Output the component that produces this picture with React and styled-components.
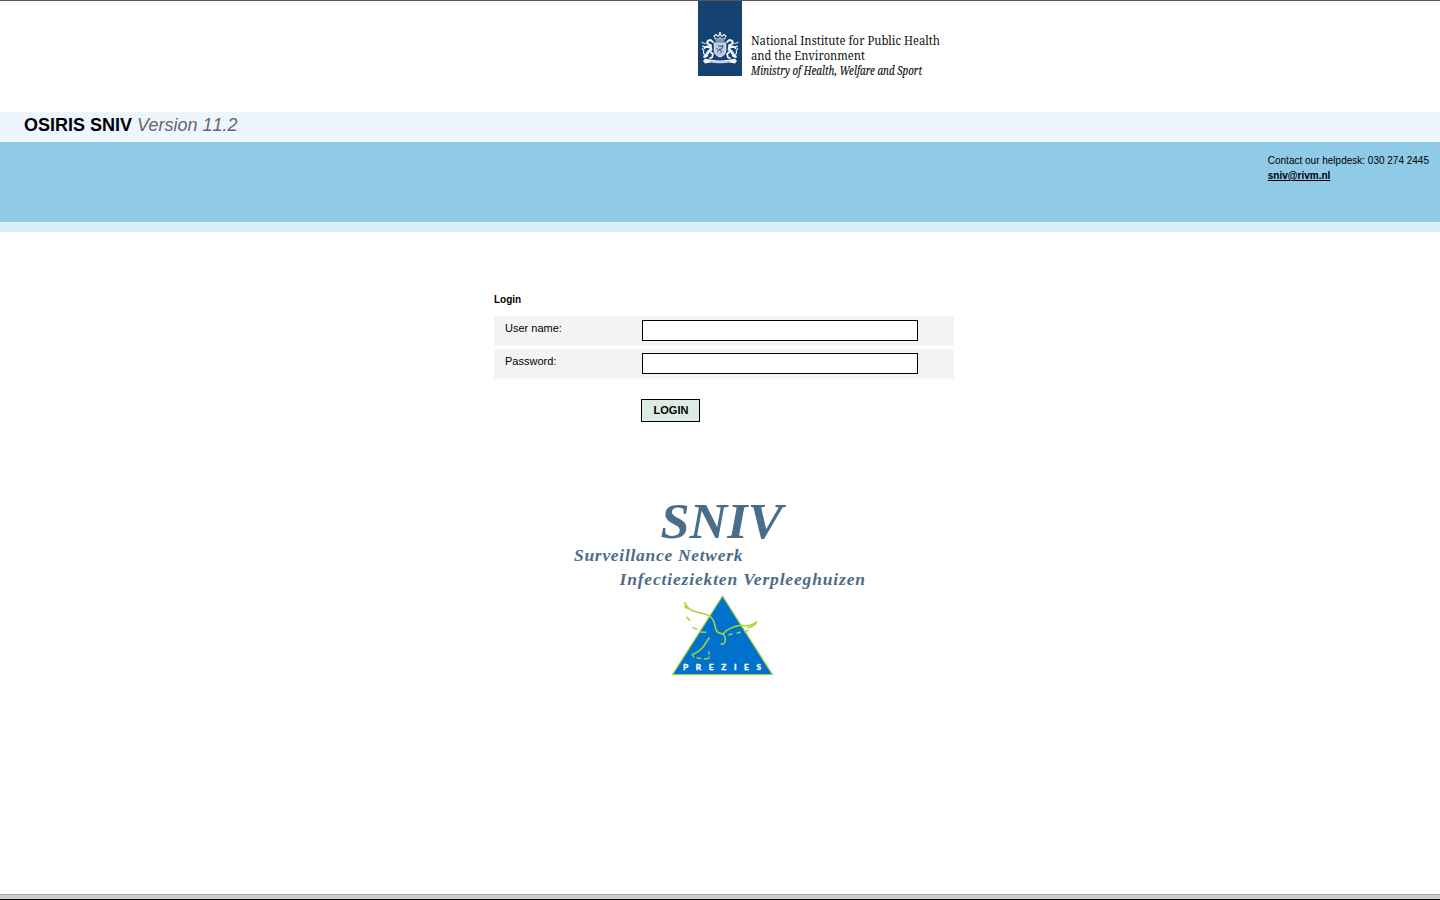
import React from "react";
import styled, { createGlobalStyle } from "styled-components";

const GlobalStyle = createGlobalStyle`
  html, body { margin: 0; padding: 0; background: #fff; }
  body { font-family: "Liberation Sans", Arial, sans-serif; color: #000; overflow: hidden; }
  *, *::before, *::after { box-sizing: border-box; }
`;

const Page = styled.div`
  display: flex;
  flex-direction: column;
  height: 900px;
  border-top: 1px solid #555;
`;

const Header = styled.header`
  height: 111px;
  padding-left: 698px;
`;

const MinistryLogo = styled.svg`
  display: block;
  width: 250px;
  height: 90px;
  overflow: visible;
`;

const TitleBar = styled.div`
  height: 30px;
  padding-left: 24px;
  background: #eef6fd;
  font-size: 18px;
  line-height: 26px;
`;

const AppName = styled.strong`
  font-weight: bold;
`;

const Version = styled.em`
  color: #666;
`;

const VersionNumber = styled.span`
  font-kerning: none;
`;

const Banner = styled.div`
  display: flex;
  justify-content: flex-end;
  height: 90px;
  padding: 11px 11px 0 0;
  background: #8fcae7;
  border-bottom: 10px solid #dceff9;
`;

const Helpdesk = styled.div`
  font-size: 10px;
  line-height: 15px;
`;

const MailLink = styled.a`
  display: block;
  width: max-content;
  color: #000;
  font-weight: bold;
  text-decoration: underline;
`;

const Main = styled.main`
  flex: 1;
  padding: 60px 0 0 494px;
`;

const Form = styled.form`
  width: 460px;
`;

const FormTitle = styled.h1`
  margin: 0 0 9px;
  font-size: 10px;
  line-height: 15px;
  font-weight: bold;
`;

const Field = styled.label`
  display: flex;
  height: 30px;
  margin-bottom: 3px;
  padding: 4px 0 0 11px;
  background: #f4f4f4;
  font-size: 11px;
  line-height: 16px;
`;

const FieldName = styled.span`
  width: 137px;
`;

const Input = styled.input`
  width: 276px;
  height: 21px;
  margin: 0;
  padding: 1px 2px;
  border: 1px solid #000;
  border-radius: 0;
  background: #fff;
  outline: none;
`;

const LoginButton = styled.button`
  display: block;
  width: 59px;
  height: 23px;
  margin: 20px 0 0 147px;
  padding: 0 0 2px 1px;
  border: 1px solid #000;
  border-radius: 0;
  background: #deebe2;
  color: #000;
  font: bold 11px "Liberation Sans", Arial, sans-serif;
`;

const Logos = styled.div`
  width: 300px;
  margin: 76px 0 0 76px;
`;

const SnivLogo = styled.svg`
  display: block;
  width: 300px;
  height: 92px;
  overflow: visible;
  font-family: "Liberation Serif", serif;
  font-weight: bold;
  font-style: italic;
`;

const PreziesLogo = styled.svg`
  display: block;
  width: 115px;
  height: 90px;
  margin-left: 95px;
`;

const Footer = styled.footer`
  height: 6px;
  background: #ccc;
  border-top: 1px solid #a5a5a5;
  border-bottom: 1px solid #000;
`;

const Lion = () => (
  <g fill="none" stroke="#eef3f8" strokeLinecap="round" strokeLinejoin="round">
    <path d="M15 41 l-2.5-2 -2.5.7 -1 2 1.5 1.8 2.5 1 -2 1.5 -3.5-.2 -1 1.2" strokeWidth="2" />
    <path d="M12 44.5 l1 4 -3 2.5 -1.5 3.7 -2 .8" strokeWidth="2.7" />
    <path d="M12.5 51 l2.5 2 -1 3.5 -2 .6" strokeWidth="1.8" />
    <path d="M8.5 54 l-3-1.5 .2-3 -1.5-2 M4 41.5 l3 1 M4.5 45 l2 1" strokeWidth="1.2" />
  </g>
);

const CoatOfArms = () => (
  <g transform="translate(0 1)">
    <g fill="none" stroke="#e8eef5" strokeWidth="1.1">
      <path d="M17.5 40 h9 M17.5 38 l-1.5-3 2-1.5 2 2 2-3 2 3 2-2 2 1.5 -1.5 3 z" />
      <path d="M22 35 v-4.2 M20.7 32 h2.6 M22 36 v2" />
    </g>
    <Lion />
    <g transform="translate(44 0) scale(-1 1)"><Lion /></g>
    <path d="M16.3 42 h11.4 v7.5 q0 4.5 -5.7 6.5 q-5.7-2 -5.7-6.5z" fill="#b9c8dc" stroke="#eef3f8" />
    <path d="M20 44.5 l2 1 3-1 -1 3 -3 1 3 2 -2 2 M18.5 47 l2 2 -1 2" fill="none" stroke="#214a7b" strokeWidth=".9" />
    <path d="M5 60 l2-2.4 6 1.2 q9 1.6 18 0 l6-1.2 2 2.4 -2 2.5 -6-.9 q-9 1.2 -18 0 l-6 .9z" fill="#eef3f8" />
    <path d="M12 60.6 q10 1 20 0" fill="none" stroke="#7793b4" strokeWidth=".6" />
  </g>
);

export default function App() {
  return (
    <Page>
      <GlobalStyle />
      <Header>
        <MinistryLogo viewBox="0 1 250 90">
          <rect y="1" width="44" height="75" fill="#154273" />
          <CoatOfArms />
          <g fontFamily="'Noto Serif', 'Liberation Serif', serif" fontSize="12.3" fill="#111">
            <text x="53" y="45" textLength="189" lengthAdjust="spacingAndGlyphs">National Institute for Public Health</text>
            <text x="53" y="60" textLength="114" lengthAdjust="spacingAndGlyphs">and the Environment</text>
            <text x="53" y="75.2" textLength="171" lengthAdjust="spacingAndGlyphs" fontStyle="italic" stroke="#111" strokeWidth=".15">Ministry of Health, Welfare and Sport</text>
          </g>
        </MinistryLogo>
      </Header>
      <TitleBar>
        <AppName>OSIRIS SNIV</AppName> <Version>Version <VersionNumber>11.2</VersionNumber></Version>
      </TitleBar>
      <Banner>
        <Helpdesk>
          Contact our helpdesk: 030 274 2445
          <MailLink href="mailto:sniv@rivm.nl">sniv@rivm.nl</MailLink>
        </Helpdesk>
      </Banner>
      <Main>
        <Form onSubmit={(e) => e.preventDefault()}>
          <FormTitle>Login</FormTitle>
          <Field>
            <FieldName>User name:</FieldName>
            <Input type="text" />
          </Field>
          <Field>
            <FieldName>Password:</FieldName>
            <Input type="password" />
          </Field>
          <LoginButton type="submit">LOGIN</LoginButton>
        </Form>
        <Logos>
          <SnivLogo viewBox="570 498 300 92" fill="#4a6d8a">
            <text x="660.5" y="537.5" fontSize="50" textLength="122" lengthAdjust="spacingAndGlyphs">SNIV</text>
            <text x="574" y="561.3" fontSize="17.5" textLength="168.5">Surveillance Netwerk</text>
            <text x="619.5" y="584.5" fontSize="17.5" textLength="245.5">Infectieziekten Verpleeghuizen</text>
          </SnivLogo>
          <PreziesLogo viewBox="0 0 345 270">
            <path d="M172.5 18 L322 253.5 H23z" fill="#0072ce" stroke="#a6ce39" strokeWidth="3.5" />
            <g fill="none" stroke="#a6d52f" strokeWidth="4.5" strokeLinecap="round" strokeLinejoin="round">
              <path d="M65 51 L60 38 Q66 58 94 66 L122 73 Q140 78 147 96 L153 120 Q160 132 174 131 Q185 143 179 158 Q174 165 168 162" />
              <path d="M174 131 Q192 112 226 106 Q255 111 274 96 Q268 110 249 113" />
              <path d="M60 49 L65 56 M66 82 L74 91 M84 113 L96 118 M107 126 L122 127 M192 134 L201 132 M217 129 L225 127 M239 125 L248 122" />
              <path d="M132 144 L123 158 Q112 178 94 188 L82 194" />
              <path d="M82 194 L86 201 M96 204 L107 205 M118 207 L130 206 M132 184 V193 M132 201 V205" strokeWidth="4" />
            </g>
            <text x="54" y="241" fontFamily="Lato, sans-serif" fontWeight="900" fontSize="25" fill="#fff" stroke="#fff" strokeWidth=".8" textLength="234">PREZIES</text>
          </PreziesLogo>
        </Logos>
      </Main>
      <Footer />
    </Page>
  );
}
